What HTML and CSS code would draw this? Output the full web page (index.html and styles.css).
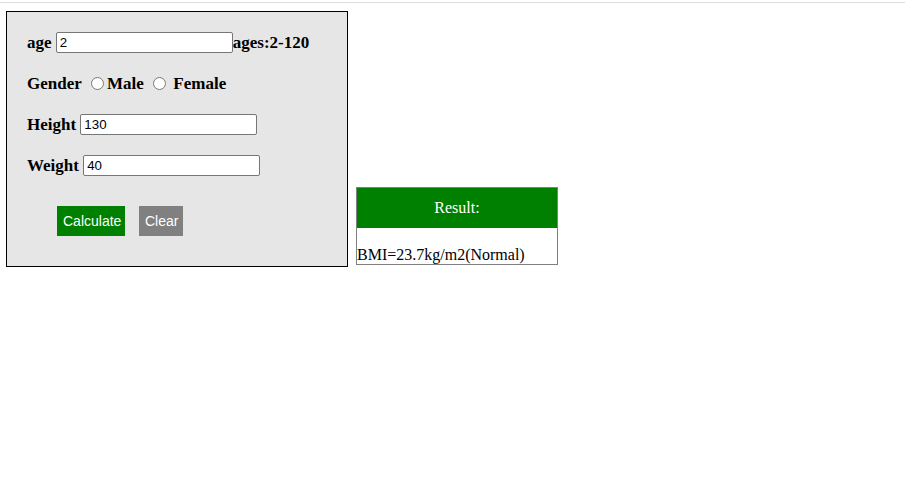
FILE: index.html
```
<!DOCTYPE html>
<html>
<head>
<meta charset="utf-8">
<link rel="stylesheet" href="styles.css">
</head>
<body>
<div class="topline"></div>
<div class="page">
  <form class="calc">
    <div class="row"><span class="lbl">age</span> <input class="field" type="text" value="2"><span class="lbl">ages:2-120</span></div>
    <div class="row"><span class="lbl">Gender</span> <input class="radio" type="radio" name="g"><span class="lbl">Male</span> <input class="radio" type="radio" name="g"> <span class="lbl">Female</span></div>
    <div class="row"><span class="lbl">Height</span> <input class="field" type="text" value="130"></div>
    <div class="row"><span class="lbl">Weight</span> <input class="field" type="text" value="40"></div>
    <div class="buttons">
      <button type="button" class="btn btn-calc">Calculate</button>
      <button type="button" class="btn btn-clear">Clear</button>
    </div>
  </form>
  <div class="result">
    <div class="result-head">Result:</div>
    <div class="result-body">BMI=23.7kg/m2(Normal)</div>
  </div>
</div>
</body>
</html>
```
FILE: styles.css
```
html, body {
  margin: 0;
  padding: 0;
  background: #fff;
  font-family: "Liberation Serif", "Times New Roman", serif;
  color: #000;
}
.topline {
  margin-top: 2px;
  height: 1px;
  width: 905px;
  background: #dedede;
}
.page {
  display: flex;
  align-items: flex-end;
  gap: 8px;
  padding-left: 6px;
  margin-top: 8px;
}
.calc {
  box-sizing: border-box;
  width: 342px;
  height: 256px;
  margin: 0;
  border: 1px solid #000;
  background: #e6e6e6;
  padding: 20px 20px 0 20px;
}
.row {
  height: 21px;
  line-height: 21px;
  margin-bottom: 20px;
  font-size: 17px;
  white-space: nowrap;
}
.lbl {
  font-weight: bold;
  font-size: 17px;
  vertical-align: top;
}
.field {
  box-sizing: border-box;
  width: 177px;
  height: 21px;
  margin: 0;
  padding: 1px 3px;
  border: 1px solid #767676;
  border-radius: 2px;
  font-family: "Liberation Sans", Arial, sans-serif;
  font-size: 13.3px;
  background: #fff;
  color: #000;
  vertical-align: top;
}
.radio {
  width: 13px;
  height: 13px;
  margin: 4px 3px 0 5px;
  vertical-align: top;
}
.buttons {
  display: flex;
  gap: 14px;
  padding-left: 30px;
  margin-top: 30px;
}
.btn {
  height: 30px;
  border: none;
  border-radius: 0;
  padding: 0 6px;
  color: #fff;
  font-family: "Liberation Sans", Arial, sans-serif;
  font-size: 14px;
}
.btn-calc {
  background: #008000;
  width: 68px;
}
.btn-clear {
  background: #808080;
  width: 44px;
}
.result {
  box-sizing: border-box;
  width: 202px;
  height: 78px;
  border: 1px solid #808080;
  margin-bottom: 2px;
  background: #fff;
}
.result-head {
  height: 40px;
  background: #008000;
  color: #fff;
  font-size: 16px;
  display: flex;
  align-items: center;
  justify-content: center;
}
.result-body {
  padding-top: 18px;
  font-size: 16px;
  line-height: 18px;
}
```
